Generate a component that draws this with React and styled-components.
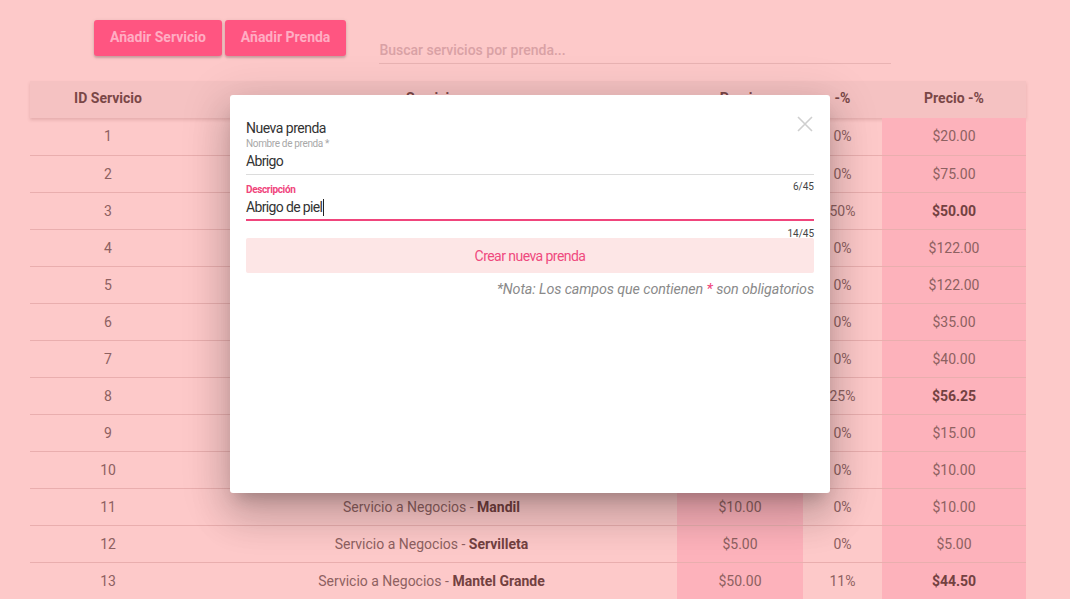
import React from "react";
import styled, { createGlobalStyle } from "styled-components";

const Global = createGlobalStyle`
  html, body { margin: 0; padding: 0; background: #fdc9c9; }
  body { font-family: Roboto, "Noto Sans", "Liberation Sans", sans-serif; overflow: hidden; }
  * { box-sizing: border-box; }
`;

const Page = styled.div`
  width: 1070px;
  height: 599px;
  position: relative;
  background: #fdc9c9;
`;

const Toolbar = styled.div`
  display: flex;
  align-items: flex-start;
  padding: 20px 0 0 94px;
  height: 81px;
`;

const ActionButton = styled.button`
  height: 36px;
  padding: 0 16px 2px;
  margin-right: 3px;
  border: none;
  border-radius: 3px;
  background: #ff5581;
  color: #ffadc3;
  font-family: Roboto, sans-serif;
  font-weight: 700;
  font-size: 14px;
  box-shadow: 0 2px 2px rgba(0,0,0,0.14), 0 1px 4px rgba(0,0,0,0.12);
  cursor: pointer;
`;

const Search = styled.input`
  margin-left: 30px;
  margin-top: 20px;
  width: 512px;
  height: 24px;
  border: none;
  border-bottom: 1px solid #e9b3b3;
  background: transparent;
  font-family: Roboto, sans-serif;
  font-size: 14px;
  font-weight: 500;
  padding: 0 0 3px 0;
  outline: none;
  &::placeholder { color: #d9a1a5; }
`;

const TableWrap = styled.div`
  padding: 0 44px 0 30px;
`;

const Table = styled.table`
  width: 996px;
  border-collapse: collapse;
  table-layout: fixed;
  font-size: 14px;
`;

const Head = styled.thead`
  background: #f5c2c2;
  box-shadow: 0 2px 3px rgba(160, 90, 90, 0.25);
`;

const Th = styled.th`
  height: 37px;
  padding: 0 0 3px 0;
  font-weight: 700;
  color: #7a4747;
  text-align: center;
  width: ${p => p.$w}px;
`;

const Tr = styled.tr`
  height: 37px;
  & + & td { border-top: 1px solid #e9aeae; }
`;

const Td = styled.td`
  padding: 0;
  text-align: center;
  color: ${p => (p.$bold ? "#734141" : "#8e6161")};
  font-weight: ${p => (p.$bold ? 700 : 400)};
  background: ${p => (p.$shade ? "#fdb2bb" : "transparent")};
`;

const Strong = styled.b`
  color: #734141;
  font-weight: 700;
`;

const Overlay = styled.div`
  position: absolute;
  inset: 0;
  padding: 95px 0 0 230px;
`;

const Modal = styled.div`
  position: relative;
  width: 600px;
  height: 398px;
  background: #fff;
  border-radius: 3px;
  padding: 25px 16px 0 16px;
  box-shadow: 0 11px 15px -7px rgba(0,0,0,0.2), 0 24px 38px 3px rgba(0,0,0,0.14), 0 9px 46px 8px rgba(0,0,0,0.12);
`;

const Close = styled.button`
  position: absolute;
  top: 20px;
  right: 16px;
  width: 18px;
  height: 18px;
  padding: 0;
  border: none;
  background: transparent;
  display: flex;
`;

const Title = styled.div`
  font-size: 14px;
  line-height: 16px;
  letter-spacing: -0.5px;
  color: #333;
  font-weight: 400;
`;

const Field = styled.div`
  position: relative;
  margin-top: ${p => p.$mt}px;
`;

const Label = styled.div`
  font-size: 10px;
  line-height: 12px;
  letter-spacing: -0.35px;
  color: ${p => (p.$active ? "#f0457c" : "#a8a8a8")};
  font-weight: ${p => (p.$active ? 700 : 400)};
`;

const Value = styled.div`
  font-size: 14px;
  letter-spacing: -0.65px;
  line-height: 22px;
  height: 25px;
  color: #333;
  display: flex;
  align-items: flex-start;
  border-bottom: ${p => (p.$active ? "2px solid #f0457c" : "1px solid #dcdcdc")};
`;

const Caret = styled.span`
  display: inline-block;
  width: 1px;
  height: 17px;
  background: #222;
  margin: 3px 0 0 1px;
`;

const Counter = styled.div`
  position: absolute;
  right: 0;
  top: calc(100% + ${p => p.$off}px);
  font-size: 10px;
  line-height: 12px;
  color: #444;
`;

const Submit = styled.button`
  display: block;
  width: 100%;
  height: 35px;
  margin-top: 17px;
  border: none;
  border-radius: 2px;
  background: #fde6e6;
  color: #ef4a7e;
  font-family: Roboto, sans-serif;
  font-size: 14px;
  letter-spacing: -0.55px;
  cursor: pointer;
`;

const Note = styled.div`
  margin-top: 8px;
  text-align: right;
  font-size: 14.3px;
  line-height: 16px;
  letter-spacing: -0.1px;
  font-style: italic;
  color: #8a8a8a;
`;

const Star = styled.span`
  color: #f0457c;
  font-size: 15px;
`;

const rows = [
  ["Camisa", 20, 0],
  ["Pantalón", 75, 0],
  ["Traje", 100, 50],
  ["Vestido de Novia", 122, 0],
  ["Vestido de Gala", 122, 0],
  ["Chamarra", 35, 0],
  ["Edredón", 40, 0],
  ["Cortina", 75, 25],
  ["Falda", 15, 0],
  ["Blusa", 10, 0],
  ["Mandil", 10, 0],
  ["Servilleta", 5, 0],
  ["Mantel Grande", 50, 11],
];

const money = v => "$" + v.toFixed(2);

export default function App() {
  return (
    <Page>
      <Global />
      <Toolbar>
        <ActionButton>Añadir Servicio</ActionButton>
        <ActionButton>Añadir Prenda</ActionButton>
        <Search placeholder="Buscar servicios por prenda..." />
      </Toolbar>
      <TableWrap>
        <Table>
          <Head>
            <tr>
              <Th $w={156}>ID Servicio</Th>
              <Th $w={491}>Servicio</Th>
              <Th $w={126}>Precio</Th>
              <Th $w={79}>-%</Th>
              <Th $w={144}>Precio -%</Th>
            </tr>
          </Head>
          <tbody>
            {rows.map(([name, price, disc], i) => (
              <Tr key={i}>
                <Td>{i + 1}</Td>
                <Td>
                  Servicio a Negocios - <Strong>{name}</Strong>
                </Td>
                <Td $shade>{money(price)}</Td>
                <Td>{disc}%</Td>
                <Td $shade $bold={disc > 0}>{money(price * (1 - disc / 100))}</Td>
              </Tr>
            ))}
          </tbody>
        </Table>
      </TableWrap>
      <Overlay>
        <Modal>
          <Close aria-label="Cerrar">
            <svg width="18" height="18" viewBox="0 0 18 18">
              <path d="M2 2 L16 16 M16 2 L2 16" stroke="#cfcfcf" strokeWidth="1.6" fill="none" />
            </svg>
          </Close>
          <Title>Nueva prenda</Title>
          <Field $mt={2}>
            <Label>Nombre de prenda *</Label>
            <Value>Abrigo</Value>
            <Counter $off={6}>6/45</Counter>
          </Field>
          <Field $mt={9}>
            <Label $active>Descripción</Label>
            <Value $active>
              Abrigo de piel<Caret />
            </Value>
            <Counter $off={7}>14/45</Counter>
          </Field>
          <Submit>Crear nueva prenda</Submit>
          <Note>
            *Nota: Los campos que contienen <Star>*</Star> son obligatorios
          </Note>
        </Modal>
      </Overlay>
    </Page>
  );
}
